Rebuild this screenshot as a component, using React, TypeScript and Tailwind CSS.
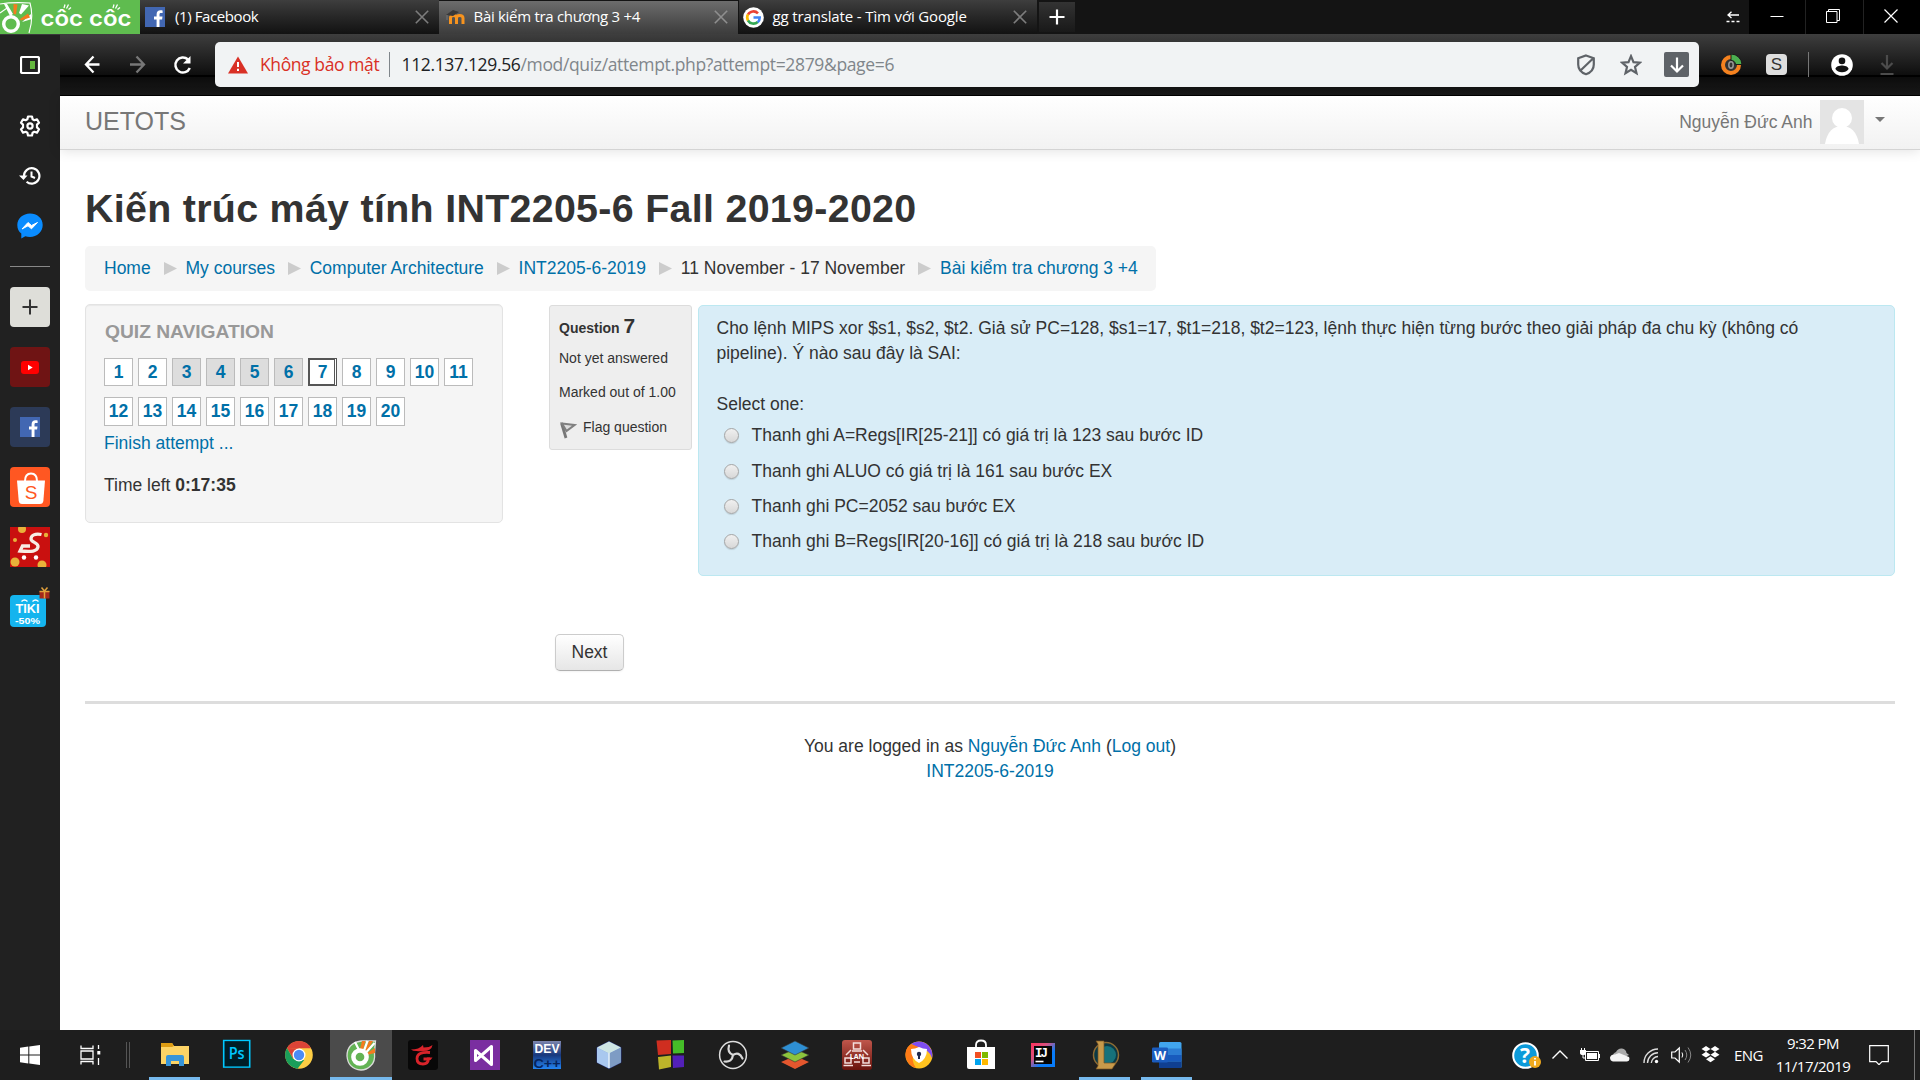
import React from "react";

const UI = "font-['Open_Sans','Noto_Sans',sans-serif]";

function Close({ dim }: { dim?: boolean }) {
  return (
    <svg className={dim ? "h-[14px] w-[14px] text-[#8f8f8f]" : "h-[14px] w-[14px] text-[#7d7d7d]"} viewBox="0 0 14 14">
      <path d="M.8.8l12.4 12.4M13.2.8L.8 13.2" stroke="currentColor" strokeWidth="1.6" fill="none" />
    </svg>
  );
}

function FacebookLogo({ size }: { size: number }) {
  return (
    <svg width={size} height={size} viewBox="0 0 20 20" className="shrink-0">
      <rect width="20" height="20" fill="#4267b2" />
      <path d="M11.6 20v-7.600H9V9.400h2.600V7.200c0-2.600 1.500-4 3.900-4 .9 0 1.800.1 2.100.2V6H16c-1.300 0-1.500.7-1.500 1.500v1.900h3l-.4 3h-2.600V20z" fill="#fff" />
    </svg>
  );
}

function CocCocBrand() {
  return (
    <div className="flex h-[34px] w-[140px] shrink-0 bg-[#5fbc4f]">
      <svg width="140" height="34" viewBox="0 0 140 34">
        <path d="M0 4Q12 2 30 3q4 14-1 30M0 13l7-5 5 8" stroke="#fff" strokeWidth="1.1" fill="none" />
        <path d="M4 4l3 0 6 10-3 2z" fill="#fff" />
        <path d="M19 13L22 4l7 1.500-8 9zM22 22l10-3-1-5z" fill="#fff" />
        <path d="M13.500 4l4 .5-1.500 10-2.500-.4z" fill="#f47b20" />
        <path d="M20 19l8-5.500 2 4-9 3z" fill="#f47b20" />
        <circle cx="11" cy="24" r="7.300" stroke="#fff" strokeWidth="3.400" fill="#5fbc4f" />
        <text x="40.500" y="25.500" textLength="91" lengthAdjust="spacingAndGlyphs" fill="#fff" fontSize="22" fontWeight="600" fontFamily="Inter, sans-serif">côc côc</text>
        <path d="M64 8l1-3.500M66.500 8.500l2-4M68.500 9.500l2.500-2M113 8l1-3.500M115.500 8.500l2-4M117.500 9.500l2.500-2" stroke="#fff" strokeWidth="1.300" />
      </svg>
    </div>
  );
}

function TabBar() {
  return (
    <div className={`flex h-[34px] bg-[#141414] text-[15px] text-white ${UI}`}>
      <CocCocBrand />
      <div className="flex h-[34px] w-[299px] items-center bg-gradient-to-b from-[#3e3e3e] to-[#121212] pl-[5px] pr-[10px]">
        <FacebookLogo size={20} />
        <span className="-mt-[2px] ml-[10px] flex-1 whitespace-nowrap tracking-[-0.4px]">(1) Facebook</span>
        <Close />
      </div>
      <div className="mt-px flex h-[33px] w-[299px] items-center bg-gradient-to-b from-[#6d6d6d] to-[#3c3c3c] pb-px pl-[7px] pr-[10px]">
        <svg width="19" height="20" viewBox="0 0 19 20" className="shrink-0">
          <path d="M4.500 17V11q0-2.500 3-2.500T10.500 11v6M10.500 11q0-2.500 3.200-2.500t3.300 2.500v6" stroke="#f7931e" strokeWidth="3" fill="none" />
          <path d="M0 8l7-5 6 2-6 4z" fill="#383838" />
          <path d="M1 8v5" stroke="#777" />
        </svg>
        <span className="-mt-px ml-[8.5px] flex-1 whitespace-nowrap tracking-[-0.3px]">Bài kiểm tra chương 3 +4</span>
        <Close dim />
      </div>
      <div className="ml-px flex h-[34px] w-[298px] items-center bg-gradient-to-b from-[#3e3e3e] to-[#121212] pl-[3.5px] pr-[10px]">
        <svg width="21" height="21" viewBox="0 0 21 21" className="shrink-0">
          <circle cx="10.500" cy="10.500" r="10.300" fill="#fff" />
          <path d="M15 6.300A6.300 6.300 0 0 0 5 7.600" stroke="#ea4335" strokeWidth="2.600" fill="none" />
          <path d="M5 7.400a6.300 6.300 0 0 0 0 6.200" stroke="#fbbc05" strokeWidth="2.600" fill="none" />
          <path d="M5 13.500a6.300 6.300 0 0 0 9.700 1.500" stroke="#34a853" strokeWidth="2.600" fill="none" />
          <path d="M10.500 10.500h6.200q0 3-2 4.700" stroke="#4285f4" strokeWidth="2.600" fill="none" />
        </svg>
        <span className="-mt-[2px] ml-[9px] flex-1 whitespace-nowrap tracking-[-0.14px]">gg translate - Tìm với Google</span>
        <Close />
      </div>
      <div className="ml-[2px] mt-[2px] flex h-[30px] w-[36px] items-center justify-center bg-gradient-to-b from-[#333] to-[#191919]">
        <svg width="16" height="16" viewBox="0 0 16 16">
          <path d="M8 .5v15M.5 8h15" stroke="#fff" strokeWidth="2.200" />
        </svg>
      </div>
      <div className="flex flex-1 items-center justify-end pr-[9px]">
        <svg width="14" height="12" viewBox="0 0 14 12" className="-mt-px">
          <path d="M13 4H2.500M5.500.8L2 4l3.500 3" stroke="#fff" strokeWidth="1.300" fill="none" />
          <path d="M.5 10.500H14" stroke="#fff" strokeWidth="1.400" strokeDasharray="3 2" />
        </svg>
      </div>
      <div className="flex h-[34px] w-[56px] items-center justify-center bg-black pb-px">
        <svg width="14" height="14" viewBox="0 0 14 14"><path d="M.5 6.500h13" stroke="#fff" strokeWidth="1" /></svg>
      </div>
      <div className="flex h-[34px] w-[58px] items-center justify-center border-l border-[#222] bg-black pb-[2px] pr-[3px]">
        <svg width="14" height="14" viewBox="0 0 14 14">
          <path d="M.5 2.500h10.500v11H.5zM2.500 2.500V.5h11v11H11" stroke="#fff" fill="none" />
        </svg>
      </div>
      <div className="flex h-[34px] w-[57px] items-center justify-center border-l border-[#222] bg-black pb-[2px] pr-[3px]">
        <svg width="14" height="14" viewBox="0 0 14 14"><path d="M.5.5l13 13M13.500.5l-13 13" stroke="#fff" strokeWidth="1.200" /></svg>
      </div>
    </div>
  );
}

function Toolbar() {
  return (
    <div className="flex h-[62px] items-center border-b border-black bg-[linear-gradient(180deg,#3e3e3e_0px,#0e0e0e_41px,#000_41px,#000_43px,#0c0c0c_43px,#191919_61px)]">
      <svg width="18" height="20" viewBox="0 0 18 20" className="ml-[24px]">
        <path d="M15.500 9.500H2.500M9.500 1.500L2 9.500 9.500 17.500" stroke="#fff" strokeWidth="2.300" fill="none" />
      </svg>
      <svg width="18" height="20" viewBox="0 0 18 20" className="ml-[28px]">
        <path d="M0 9.500h13M6.500 1.500l7.500 8-7.500 8" stroke="#777" strokeWidth="2.300" fill="none" />
      </svg>
      <svg width="20" height="20" viewBox="0 0 20 20" className="ml-[25px]">
        <path d="M15 4.500A7.500 7.500 0 1 0 16.800 13" stroke="#fff" strokeWidth="2.500" fill="none" />
        <path d="M17.500 1v7.500H10z" fill="#fff" />
      </svg>
      <div className={`ml-[22px] flex h-[45px] w-[1484px] items-center rounded-[5px] bg-[#f1f3f4] ${UI} text-[17.5px]`}>
        <svg width="20" height="18" viewBox="0 0 20 18" className="ml-[13px]">
          <path d="M10 .5L20 17.500H0z" fill="#d93025" />
          <path d="M10 6v5M10 12.800v2.200" stroke="#fff" strokeWidth="2" />
        </svg>
        <span className="ml-[12px] w-[120px] whitespace-nowrap tracking-[-0.4px] text-[#d93025]">Không bảo mật</span>
        <div className="ml-[8.5px] h-[25px] w-px bg-[#80868b]" />
        <span className="ml-[12px] flex-1 whitespace-nowrap tracking-[-0.35px] text-[#80868b]"><span className="text-[#202124]">112.137.129.56</span>/mod/quiz/attempt.php?attempt=2879&amp;page=6</span>
        <svg width="20" height="22" viewBox="0 0 20 22">
          <path d="M10 1.500l7.800 2.700v6.300c0 4.500-3.300 8.200-7.800 9.700-4.500-1.500-7.800-5.200-7.800-9.700V4.200zM4.500 16.500L16.500 5" stroke="#5f6368" strokeWidth="2.200" fill="none" />
        </svg>
        <svg width="22" height="22" viewBox="0 0 22 22" className="ml-[24px]">
          <path d="M11 2.200l2.500 6 6.400.5-4.900 4.200 1.500 6.300-5.500-3.400-5.500 3.400L7 12.900 2.100 8.700l6.400-.5z" stroke="#5f6368" strokeWidth="2.200" fill="none" />
        </svg>
        <div className="ml-[22px] mr-[10px] flex h-[25px] w-[25px] items-center justify-center rounded-[2px] bg-[#5f6368]">
          <svg width="16" height="18" viewBox="0 0 16 18"><path d="M8 1.500v14M2 9.500l6 6 6-6" stroke="#fff" strokeWidth="2.200" fill="none" /></svg>
        </div>
      </div>
      <svg width="22" height="22" viewBox="0 0 22 22" className="ml-[21px]">
        <circle cx="11" cy="11" r="8" stroke="#f5821f" strokeWidth="4" fill="#333" />
        <path d="M11 0v6.500a4.500 4.500 0 0 1 4.500 4H22A11 11 0 0 0 11 0z" fill="#4caf50" stroke="#1a1a1a" strokeWidth="1" />
        <ellipse cx="11" cy="11" rx="2.200" ry="3.200" stroke="#999" strokeWidth="1.500" fill="#333" />
      </svg>
      <div className="ml-[24px] flex h-[21px] w-[21px] items-center justify-center rounded-[4px] bg-[#dedede] font-['Liberation_Sans',sans-serif] text-[17px] leading-none text-[#333]">S</div>
      <div className="ml-[21px] h-[25px] w-px bg-[#777]" />
      <svg width="22" height="22" viewBox="0 0 22 22" className="ml-[22px]">
        <circle cx="11" cy="11" r="10.800" fill="#fff" />
        <circle cx="11" cy="6.900" r="3.300" fill="#111" />
        <path d="M4.400 15c0-2.500 4.400-3.500 6.600-3.500s6.600 1 6.600 3.500A8 8 0 0 1 11 18.300 8 8 0 0 1 4.400 15z" fill="#111" />
      </svg>
      <svg width="14" height="22" viewBox="0 0 14 22" className="ml-[27px]">
        <path d="M7 1v13M1.500 9L7 14.500 12.500 9M.5 20h13" stroke="#4c4c4c" strokeWidth="2.200" fill="none" />
      </svg>
    </div>
  );
}

function Sidebar() {
  return (
    <aside className="flex w-[60px] shrink-0 flex-col items-center border-t border-[#3a3a3a] bg-[#212121]">
      <svg width="20" height="18" viewBox="0 0 20 18" className="mt-[21px]">
        <rect x="1" y="1" width="18" height="16" rx="1.500" stroke="#fff" strokeWidth="2.200" fill="none" />
        <rect x="10" y="5" width="5" height="8" fill="#65b83f" />
      </svg>
      <svg width="22" height="22" viewBox="0 0 22 22" className="mt-[41px]">
        <path d="M9 1.500h4l.6 2.700 1.800 1 2.600-.9 2 3.400-2 1.900v2.800l2 1.900-2 3.400-2.600-.9-1.800 1-.6 2.700H9l-.6-2.700-1.800-1-2.600.9-2-3.400 2-1.900V9.600l-2-1.900 2-3.400 2.600.9 1.800-1z" stroke="#fff" strokeWidth="2.200" strokeLinejoin="round" fill="none" />
        <circle cx="11" cy="11" r="2.600" stroke="#fff" strokeWidth="2.200" fill="none" />
      </svg>
      <svg width="22" height="20" viewBox="0 0 22 20" className="mt-[29px]">
        <path d="M5 10a7.700 7.700 0 1 1 2.600 5.700" stroke="#fff" strokeWidth="2.200" fill="none" />
        <path d="M0 9.500h8.500L4.500 14zM1 8h7" fill="#fff" />
        <path d="M12.500 5.500v5l3.500 1.500" stroke="#fff" strokeWidth="2" fill="none" />
      </svg>
      <svg width="26" height="26" viewBox="0 0 26 26" className="mt-[27px]">
        <path d="M13 .5C6 .5.3 5.500.3 12c0 4 1.500 6.500 4 8.500v5l4-2.200c1.500.4 3 .6 4.700.6 7 0 12.700-5 12.700-11.900S20 .5 13 .5z" fill="#0a8cff" />
        <path d="M5 16l6-6.500 3.500 3 6-3-6 6.300-3.500-3z" stroke="#fff" strokeWidth="1" fill="#fff" />
      </svg>
      <div className="mt-[27px] h-px w-[40px] bg-[#888]" />
      <div className="mt-[20px] flex h-[40px] w-[40px] items-center justify-center rounded-[4px] bg-[#deded9]">
        <svg width="16" height="16" viewBox="0 0 16 16"><path d="M8 .5v15M.5 8h15" stroke="#333" strokeWidth="2" /></svg>
      </div>
      <div className="mt-[20px] flex h-[40px] w-[40px] items-center justify-center rounded-[4px] bg-[#6f1414]">
        <svg width="18" height="13" viewBox="0 0 18 13"><rect width="18" height="13" rx="3" fill="#f00" /><path d="M7 3.800v5.400l4.700-2.700z" fill="#fff" /></svg>
      </div>
      <div className="mt-[20px] flex h-[40px] w-[40px] items-center justify-center rounded-[4px] bg-[#2c3a57]">
        <FacebookLogo size={20} />
      </div>
      <svg width="40" height="40" viewBox="0 0 40 40" className="mt-[20px]">
        <rect width="40" height="40" rx="4" fill="#ff5722" />
        <path d="M15 14q0-7.500 6-7.500t6 7.500" stroke="#fff" strokeWidth="2" fill="none" />
        <path d="M7 13.500h28l-1.600 20q-.3 3.500-3.500 3.500H12q-3 0-3.300-3.500z" fill="#fff" />
        <text x="21" y="32" textAnchor="middle" fontSize="19" fill="#ff5722" fontFamily="Liberation Sans, sans-serif">S</text>
      </svg>
      <svg width="40" height="40" viewBox="0 0 40 40" className="mt-[20px]">
        <rect width="40" height="40" fill="#c9100f" />
        <circle cx="12" cy="2" r="4" fill="#e9b23a" /><circle cx="5" cy="13" r="2" fill="#e9b23a" />
        <circle cx="36" cy="8" r="2.200" fill="#e9b23a" /><circle cx="5" cy="35" r="4.500" fill="#e9b23a" />
        <circle cx="32" cy="38" r="4.500" fill="#e9b23a" />
        <path d="M31.500 7.500C25 6 21 8.500 21 12s8 3.500 7 8-6 5-18 4l2.500-5H20" stroke="#f7ece4" strokeWidth="3.300" fill="none" />
        <circle cx="14" cy="30.500" r="2.200" fill="#fff" /><circle cx="26" cy="30.500" r="2.200" fill="#fff" />
      </svg>
      <svg width="40" height="42" viewBox="0 0 40 42" className="mt-[19px]">
        <rect y="9" width="36" height="32" rx="4" fill="#14b4ee" />
        <text x="17.500" y="26.500" textAnchor="middle" fontSize="12.500" fontWeight="700" fill="#fff" fontFamily="Liberation Sans, sans-serif" textLength="24" lengthAdjust="spacingAndGlyphs">TIKI</text>
        <path d="M11.500 15.500q3-3 6 0M22.500 15.500q3-3 6 0" stroke="#fff" strokeWidth="1.300" fill="none" />
        <text x="17.500" y="37.500" textAnchor="middle" fontSize="9" fontWeight="700" fill="#fff" fontFamily="Liberation Sans, sans-serif" textLength="25" lengthAdjust="spacingAndGlyphs">-50%</text>
        <rect x="29.500" y="5" width="10" height="7.500" fill="#a3281b" />
        <path d="M34.500 5v7.500M29.500 5.500h10M34.500 5l-3-3.500M34.500 5l3-3.500" stroke="#e2a13c" strokeWidth="1.500" />
      </svg>
    </aside>
  );
}

const crumbs: { t: string; x: boolean }[] = [
  { t: "Home", x: true },
  { t: "My courses", x: true },
  { t: "Computer Architecture", x: true },
  { t: "INT2205-6-2019", x: true },
  { t: "11 November - 17 November", x: false },
  { t: "Bài kiểm tra chương 3 +4", x: true },
];

const options = [
  "Thanh ghi A=Regs[IR[25-21]] có giá trị là 123 sau bước ID",
  "Thanh ghi ALUO có giá trị là 161 sau bước EX",
  "Thanh ghi PC=2052 sau bước EX",
  "Thanh ghi B=Regs[IR[20-16]] có giá trị là 218 sau bước ID",
];

function QuizButton({ n }: { n: number }) {
  const tone =
    n === 7
      ? "border-2 border-r-[3px] border-[#555] bg-white pl-px [border-right-style:double]"
      : n >= 3 && n <= 6
        ? "border border-[#bbb] bg-[#ddd]"
        : "border border-[#bbb] bg-white";
  const height = n > 11 ? "h-[29px]" : "h-[28px]";
  return <div className={`flex w-[29px] items-center justify-center font-bold text-[#0070a8] ${height} ${tone}`}>{n}</div>;
}

function Page() {
  return (
    <main className="h-[934px] min-w-0 flex-1 bg-white font-['Liberation_Sans',Arial,sans-serif] text-[17.5px] leading-[25px] text-[#333]">
      <header className="flex h-[54px] items-start justify-between border-b border-[#d4d4d4] bg-gradient-to-b from-white to-[#f2f2f2] pl-[25px] pr-[35px] text-[#777] shadow-[0_1px_12px_rgba(0,0,0,0.12)]">
        <span className="mt-[13px] text-[25px]">UETOTS</span>
        <div className="flex">
          <span className="mt-[14px]">Nguyễn Đức Anh</span>
          <svg width="44" height="44" viewBox="0 0 44 44" className="ml-[7.5px] mt-[4px]">
            <rect width="44" height="44" fill="#e4e4e4" />
            <circle cx="22" cy="18" r="10" fill="#fff" />
            <path d="M5 44c2-12 8-18 17-18s15 6 17 18z" fill="#fff" />
          </svg>
          <svg width="10" height="5" viewBox="0 0 10 5" className="ml-[11px] mt-[21px]"><path d="M0 0h10L5 5z" fill="#777" /></svg>
        </div>
      </header>
      <div className="pl-[25px] pr-[25px]">
        <h1 className="mt-[33px] h-[50px] whitespace-nowrap text-[39.375px] font-bold leading-[50px] tracking-[0.31px]">Kiến trúc máy tính INT2205-6 Fall 2019-2020</h1>
        <nav className="mt-[13px] flex h-[45px] w-[1071px] items-center whitespace-nowrap rounded-[5px] bg-[#f5f5f5] pl-[19px]">
          {crumbs.map((c, i) => (
            <React.Fragment key={c.t}>
              {i > 0 && (
                <svg width="13" height="13" viewBox="0 0 13 13" className="ml-[13.2px] mr-[8.6px] shrink-0"><path d="M0 0l13 6.500-13 6.500z" fill="#ccc" /></svg>
              )}
              <span className={c.x ? "text-[#0070a8]" : "text-[#333]"}>{c.t}</span>
            </React.Fragment>
          ))}
        </nav>
        <div className="mt-[13px] flex items-start">
          <section className="h-[219px] w-[418px] rounded-[5px] border border-[#e3e3e3] bg-[#f5f5f5] pl-[18px] shadow-[inset_0_1px_1px_rgba(0,0,0,0.05)]">
            <h2 className="ml-px mt-[14px] text-[19.25px] font-bold tracking-[-0.03px] text-[#999]">QUIZ NAVIGATION</h2>
            <div className="mt-[14px] grid w-[369px] grid-cols-[repeat(11,29px)] gap-x-[5px] gap-y-[11px]">
              {Array.from({ length: 20 }, (_, i) => <QuizButton key={i} n={i + 1} />)}
            </div>
            <p className="mt-[5px] text-[#0070a8]">Finish attempt ...</p>
            <p className="mt-[17px]">Time left <b>0:17:35</b></p>
          </section>
          <section className="ml-[46px] mt-px h-[145px] w-[143px] shrink-0 rounded-[3px] border border-[#dcdcdc] bg-[#eee] pl-[9px] text-[14px] leading-[20px]">
            <h3 className="mt-[7px] h-[25px] whitespace-nowrap text-[14px] font-bold leading-[25px]">Question <span className="text-[21px]">7</span></h3>
            <p className="mt-[10px]">Not yet answered</p>
            <p className="mt-[14px] whitespace-nowrap">Marked out of 1.00</p>
            <p className="mt-[15px] flex">
              <svg width="17" height="18" viewBox="0 0 17 18" className="ml-px mr-[6px] mt-[4px]">
                <path d="M1.500 2l4.500 15" stroke="#777" strokeWidth="2.800" />
                <path d="M2 2.500l12.500 1.500-8 6z" stroke="#808080" strokeWidth="2" fill="#ddd" />
              </svg>
              Flag question
            </p>
          </section>
          <section className="ml-[6px] mt-px h-[271px] flex-1 rounded-[5px] border border-[#bce8f1] bg-[#d9edf7] pl-[17.5px] pr-[18px]">
            <p className="mt-[10px]">Cho lệnh MIPS xor $s1, $s2, $t2. Giả sử PC=128, $s1=17, $t1=218, $t2=123, lệnh thực hiện từng bước theo giải pháp đa chu kỳ (không có<br />pipeline). Ý nào sau đây là SAI:</p>
            <p className="mt-[26px]">Select one:</p>
            <div className="mt-[1.4px] flex flex-col">
              {options.map((o) => (
                <div key={o} className="flex h-[35.2px] items-center">
                  <span className="ml-[7px] mr-[13px] h-[15px] w-[15px] rounded-full border border-[#a5a5a5] bg-gradient-to-b from-[#f0f0f0] to-[#d8d8d8] shadow-[0_1px_1px_rgba(0,0,0,0.12)]" />
                  <span>{o}</span>
                </div>
              ))}
            </div>
          </section>
        </div>
        <button className="ml-[470px] mt-[58px] block h-[37px] w-[69px] rounded-[5px] border border-[#ccc] border-b-[#b0b0b0] bg-gradient-to-b from-white to-[#e6e6e6] leading-[25px] shadow-[0_1px_2px_rgba(0,0,0,0.05)]">Next</button>
        <div className="mt-[30px] h-[3px] bg-[#ddd]" />
        <footer className="mt-[30px] text-center">
          You are logged in as <span className="text-[#0070a8]">Nguyễn Đức Anh</span> (<span className="text-[#0070a8]">Log out</span>)
          <br />
          <span className="text-[#0070a8]">INT2205-6-2019</span>
        </footer>
      </div>
    </main>
  );
}

function TaskItem({ children, active, running }: { children: React.ReactNode; active?: boolean; running?: boolean }) {
  return (
    <div className={active ? "flex h-[50px] w-[62px] flex-col items-center bg-[#4b4b4b]" : "flex h-[50px] w-[62px] flex-col items-center"}>
      <svg width="32" height="32" viewBox="0 0 32 32" className="mt-[9px] shrink-0">{children}</svg>
      <div className={active ? "mt-[6px] h-[3px] w-[62px] bg-[#76b9ed]" : running ? "mt-[6px] h-[3px] w-[51px] bg-[#76b9ed]" : "hidden"} />
    </div>
  );
}

function Taskbar() {
  return (
    <footer className={`flex h-[50px] bg-[#1e1e1e] text-white ${UI}`}>
      <svg width="20" height="20" viewBox="0 0 20 20" className="ml-[20px] mt-[15px]">
        <path d="M0 2.800l8.300-1.200v8H0zM9.300 1.400L20 0v9.600H9.300zM0 10.500h8.300v8L0 17.300zM9.300 10.500H20V20L9.300 18.600z" fill="#fff" />
      </svg>
      <svg width="21" height="20" viewBox="0 0 21 20" className="ml-[39.5px] mt-[15px]">
        <path d="M1 .5V3.500h12V.5M1 19.500V16.500h12V19.500M1 6h12v8H1zM18.500 0v4M18.500 13v7" stroke="#fff" strokeWidth="1.300" fill="none" />
        <rect x="17.300" y="6" width="3" height="3.500" fill="#fff" />
      </svg>
      <div className="ml-[25px] mr-[14px] mt-[12px] h-[26px] w-[4px] border-x border-[#555]" />
      <TaskItem running>
        <path d="M2 4h11l2 3h-13zM2 7v18h28V7z" fill="#fdd466" /><path d="M2 4h11l2 3-2 1H2z" fill="#dd9c13" />
        <path d="M7 27v-9q0-2 2-2h14q2 0 2 2v9h-5v-5h-8v5z" fill="#3895d9" />
      </TaskItem>
      <TaskItem>
        <rect x="2.700" y="1.700" width="26" height="31" fill="#001d26" stroke="#00c8ff" strokeWidth="1.600" transform="scale(1 .86)" />
        <text x="15.700" y="20" textAnchor="middle" fontSize="16" fontWeight="600" fill="#00c8ff" fontFamily="Open Sans, sans-serif" textLength="16" lengthAdjust="spacingAndGlyphs">Ps</text>
      </TaskItem>
      <TaskItem>
        <circle cx="16" cy="16" r="13.800" fill="#fdce44" />
        <path d="M4 9A13.800 13.800 0 0 1 28 9.200H16z" fill="#db4437" />
        <path d="M4 9l6 10.500 6-10.300z" fill="#db4437" /><path d="M4 9l6.200 11 11 1-6.700 8.700A13.800 13.800 0 0 1 4 9z" fill="#1a9e5a" />
        <circle cx="16" cy="16" r="6.500" fill="#fff" /><circle cx="16" cy="16" r="5.200" fill="#4c8bf5" />
      </TaskItem>
      <TaskItem active>
        <path d="M16 2h14.500l-1 12q1 9-4 13-4 4-9.500 4Q3 30 2 17 2 4 16 2z" fill="#63b354" stroke="#dcdcdc" strokeWidth="1.300" />
        <path d="M17 2l3.500 0-2.500 9-3-1zM24 2h4l-6 10-2-1zM30 9v5l-8 2v-2z" fill="#f47b20" />
        <path d="M10 3l4 8M22.500 2L18.500 13M29.500 4l-8 9" stroke="#fff" strokeWidth="2.200" />
        <circle cx="15" cy="18" r="6.600" stroke="#fff" strokeWidth="4.500" fill="#63b354" />
      </TaskItem>
      <TaskItem>
        <rect x="1" y="1" width="30" height="30" rx="3" fill="#080808" />
        <path d="M4 10.500q8 0 12-4.500l.5 2.500q6 0 9-2.500-1 6-9 6-4 .5-7 0-4 0-5.500-1.500z" fill="#d8232a" />
        <path d="M23 13.500q-13-1-13 6 0 5.500 6 5.500 5 0 5.500-5h-5" stroke="#d8232a" strokeWidth="2.800" fill="none" />
        <path d="M20 18.500h5.500l-2 2.500h-5z" fill="#d8232a" />
      </TaskItem>
      <TaskItem>
        <rect x="1" y="1" width="30" height="30" fill="#7a2ea0" />
        <path d="M6.500 11.500v10L22.500 7.500v18z" stroke="#fff" strokeWidth="3" strokeLinejoin="round" fill="none" />
      </TaskItem>
      <TaskItem>
        <defs><linearGradient id="dev" x2="0" y2="1"><stop stopColor="#7d86ae" /><stop offset=".5" stopColor="#18387d" /><stop offset="1" stopColor="#2384f2" /></linearGradient></defs>
        <rect x="2" y="2" width="28" height="28" fill="url(#dev)" />
        <text x="16" y="14" textAnchor="middle" fontSize="13" fontWeight="700" fill="#fff" fontFamily="Liberation Sans, sans-serif" textLength="25" lengthAdjust="spacingAndGlyphs">DEV</text>
        <text x="16" y="28.500" textAnchor="middle" fontSize="12.500" fontWeight="700" fill="#05245e" fontFamily="Liberation Sans, sans-serif" textLength="27" lengthAdjust="spacingAndGlyphs">C++</text>
      </TaskItem>
      <TaskItem>
        <path d="M16 2.500l12 6v15l-12 6-12-6v-15z" fill="#87a9d8" stroke="#26327a" />
        <path d="M16 2.500l12 6-12 6-12-6z" fill="#cfe6e4" /><path d="M4 8.500l12 6v15l-12-6z" fill="#a9c8ef" /><path d="M16 14.500v15l12-6v-15z" fill="#7e9cc4" />
        <path d="M16 14v15" stroke="#e4f0fa" strokeWidth="1.500" />
      </TaskItem>
      <TaskItem>
        <path d="M1.500 1.500l14.500-.5v14l-13 1z" fill="#cf2e20" /><path d="M17.500 1.500l11.500-.5v13l-11 .5z" fill="#45bd28" />
        <path d="M3 18l13-1.500v11.500L4 30.500z" fill="#bdb52a" /><path d="M17.500 16.500h11.500v11.500l-11 1z" fill="#5320b8" />
      </TaskItem>
      <TaskItem>
        <circle cx="16" cy="16" r="13.400" fill="#1c1c1c" stroke="#ddd" strokeWidth="1.500" />
        <path d="M12 6.500q-2 7 4 9.500M16 16q-1 7.500-8.500 6.500M16 16q6-4 9.500 3.500" stroke="#d8d8d8" strokeWidth="2.200" fill="none" strokeLinecap="round" />
      </TaskItem>
      <TaskItem>
        <path d="M16 17l14 6-14 7-14-7z" fill="#e4572e" /><path d="M16 10l14 6-14 7-14-7z" fill="#8cc43d" stroke="#333" strokeWidth=".6" /><path d="M16 2l14 7-14 7L2 9z" fill="#2e8fd3" stroke="#333" strokeWidth=".6" />
      </TaskItem>
      <TaskItem>
        <defs><linearGradient id="lan" x2="0" y2="1"><stop stopColor="#c0564b" /><stop offset="1" stopColor="#69130c" /></linearGradient></defs>
        <rect x="1" y="1" width="30" height="30" rx="3" fill="url(#lan)" />
        <path d="M12.500 4h7v6h-7zM11 12h10M4 19h6v5H4zM2.500 26.500H12M22 19h6v5h-6zM20.500 26.500H30M10 11l-5 5M22 11l5 5M13 23h6" stroke="#f3dedb" strokeWidth="1.500" fill="none" />
        <text x="16" y="19.500" textAnchor="middle" fontSize="7" fontWeight="700" fill="#fff" fontFamily="Open Sans, sans-serif">LAN</text>
      </TaskItem>
      <TaskItem>
        <circle cx="16" cy="16" r="13.500" fill="#ffc31f" />
        <path d="M8 5a13.500 13.500 0 0 1 21 14q-3-9-12-9z" fill="#7f4df3" /><path d="M8 5A13.500 13.500 0 0 0 13 29q-6-8-1-18l6-2z" fill="#ff7b16" />
        <path d="M16 8q4 2 8 2 0 10-8 14-8-4-8-14 4 0 8-2z" fill="#fff" /><circle cx="16" cy="15" r="2.200" fill="#222b4c" /><path d="M16 15v5" stroke="#222b4c" strokeWidth="2" />
      </TaskItem>
      <TaskItem>
        <path d="M11 9V6q0-4.500 5-4.500T21 6v3" stroke="#fff" strokeWidth="1.800" fill="none" /><path d="M2 8h28v22H4q-2 0-2-2z" fill="#fff" />
        <path d="M10 13h6v6h-6z" fill="#f25022" /><path d="M17 13h6v6h-6z" fill="#7fba00" /><path d="M10 20h6v6h-6z" fill="#00a4ef" /><path d="M17 20h6v6h-6z" fill="#ffb900" />
      </TaskItem>
      <TaskItem>
        <defs><linearGradient id="ij" x2="1" y2="1"><stop stopColor="#fe315d" /><stop offset=".35" stopColor="#d8517e" /><stop offset=".65" stopColor="#087cfa" /></linearGradient></defs>
        <rect x="4" y="4" width="24" height="24" fill="url(#ij)" /><rect x="7" y="7" width="18" height="18" fill="#050505" />
        <text x="8" y="17.500" fontSize="12.500" fontWeight="700" fill="#fff" fontFamily="Liberation Mono, monospace" textLength="13">IJ</text>
        <path d="M8.500 22.500h8" stroke="#fff" strokeWidth="1.600" />
      </TaskItem>
      <TaskItem running>
        <circle cx="17" cy="16" r="12.500" fill="#0b3a45" stroke="#8d6b34" strokeWidth="1.500" /><circle cx="18" cy="16" r="9" fill="#16727b" />
        <path d="M7 2h8v22h12l-4 6H7l2-3V5z" fill="#c79a4b" stroke="#7a5522" strokeWidth=".7" />
      </TaskItem>
      <TaskItem running>
        <rect x="8" y="3" width="22.500" height="26" rx="1.500" fill="#41a5ee" /><path d="M8 9.500h22.500V16H8z" fill="#2b7cd3" /><path d="M8 16h22.500v6.500H8z" fill="#185abd" /><path d="M8 22.500h22.500V28q0 1-1 1H8z" fill="#103f91" />
        <rect x="1" y="8.500" width="16" height="15" rx="1.300" fill="#1b5cbe" />
        <text x="9" y="20.500" textAnchor="middle" fontSize="12.500" fontWeight="700" fill="#fff" fontFamily="Open Sans, sans-serif">W</text>
      </TaskItem>
      <div className="flex-1" />
      <svg width="29" height="28" viewBox="0 0 29 28" className="mt-[12px]">
        <circle cx="13.500" cy="13.500" r="12.300" fill="#0c9ad9" stroke="#fff" strokeWidth="2" />
        <text x="13" y="21" textAnchor="middle" fontSize="21" fontWeight="700" fill="#fff" fontFamily="Open Sans, sans-serif">?</text>
        <circle cx="23" cy="20" r="6" fill="#f0a91d" /><path d="M23 19v4.500M23 16v1.500" stroke="#fff" strokeWidth="1.800" />
      </svg>
      <svg width="16" height="9" viewBox="0 0 16 9" className="ml-[11px] mt-[20px]"><path d="M.5 8.500L8 1l7.500 7.500" stroke="#fff" strokeWidth="1.400" fill="none" /></svg>
      <svg width="20" height="14" viewBox="0 0 20 14" className="ml-[12px] mt-[18px]">
        <path d="M5.500 3.500h13v9h-13z" stroke="#fff" fill="none" /><path d="M7 5h10v6H7zM18.500 6H20v4h-1.500zM0 2h6v3q0 2-3 2t-3-2z" fill="#fff" /><path d="M1.500 0v3M4.500 0v3M3 6v4h2" stroke="#fff" fill="none" />
      </svg>
      <svg width="20" height="14" viewBox="0 0 20 14" className="ml-[10px] mt-[18px]">
        <path d="M3 8q0-3 3-4 2-4 6-3.500 4 .5 4.500 4.500L19 7 5 13z" fill="#aaa" /><path d="M0 9.500Q1 6 5 6.500L9 5l10 4q1.500 4-2 4.500H3Q0 13 0 9.500z" fill="#f4f4f4" />
      </svg>
      <svg width="16" height="16" viewBox="0 0 16 16" className="ml-[13px] mt-[18px]">
        <path d="M1 15A14 14 0 0 1 15 1M4.500 15A10.500 10.500 0 0 1 15 4.700M8.300 15A7 7 0 0 1 15 8.500" stroke="#ddd" strokeWidth="1.400" fill="none" /><circle cx="13.500" cy="13.500" r="1.700" fill="#fff" />
      </svg>
      <svg width="21" height="18" viewBox="0 0 21 18" className="ml-[12px] mt-[16px]">
        <path d="M.7 6H4l4.300-4v14L4 12H.7z" stroke="#fff" strokeWidth="1.200" fill="none" /><path d="M11 6.500q1.500 2.500 0 5" stroke="#fff" fill="none" /><path d="M14 4q3.500 5 0 10M17 1.500q5.500 7.500 0 15" stroke="#888" fill="none" />
      </svg>
      <svg width="19" height="17" viewBox="0 0 19 17" className="ml-[9px] mt-[16px]">
        <path d="M5 0l4.500 2.900L5 5.800.5 2.900zM14 0l4.500 2.900L14 5.800 9.500 2.900zM5 5.800l4.500 2.900L5 11.600.5 8.700zM14 5.800l4.500 2.900-4.500 2.900-4.500-2.900zM9.500 10.200l4.500 3-4.500 3-4.500-3z" fill="#fff" />
      </svg>
      <span className="ml-[14px] mt-[15px] w-[29px] whitespace-nowrap text-[15px] leading-[20px] tracking-[-0.6px]">ENG</span>
      <div className="ml-[9px] mt-[2px] flex w-[82px] flex-col items-center whitespace-nowrap text-[15px] leading-[23px]">
        <span className="tracking-[-0.6px]">9:32 PM</span>
        <span className="tracking-[-0.5px]">11/17/2019</span>
      </div>
      <svg width="20" height="21" viewBox="0 0 20 21" className="ml-[15px] mt-[14px]"><path d="M.7 1.700h18.600v16H13l-3 3-3-3H.7z" stroke="#fff" strokeWidth="1.200" fill="none" /></svg>
      <div className="ml-[25px] mr-[5px] h-[50px] w-px bg-[#777]" />
    </footer>
  );
}

export default function App() {
  return (
    <div className="flex h-[1080px] w-[1920px] flex-col overflow-hidden bg-[#212121]">
      <TabBar />
      <div className="flex h-[996px]">
        <Sidebar />
        <div className="flex min-w-0 flex-1 flex-col">
          <Toolbar />
          <Page />
        </div>
      </div>
      <Taskbar />
    </div>
  );
}
